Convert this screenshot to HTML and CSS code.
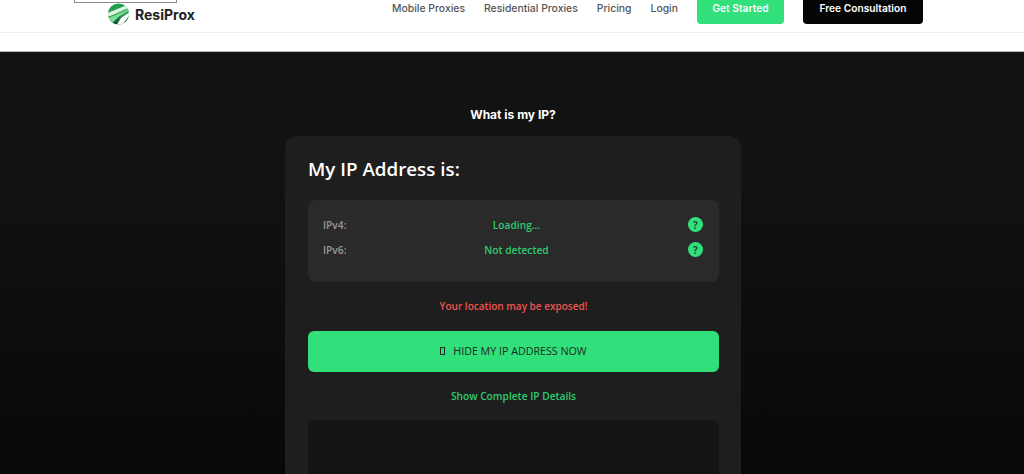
FILE: index.html
```html
<!DOCTYPE html>
<html lang="en">
<head>
<meta charset="utf-8">
<title>What is my IP? - ResiProx</title>
<link rel="stylesheet" href="styles.css">
</head>
<body>
<header class="site-header">
  <div class="brand">
    <span class="broken-image"></span>
    <svg class="brand-icon" viewBox="0 0 24 24" aria-hidden="true">
      <defs>
        <linearGradient id="globe" x1="0" y1="0" x2="0" y2="1">
          <stop offset="0" stop-color="#1fa04f"/>
          <stop offset="0.55" stop-color="#2a9a52"/>
          <stop offset="1" stop-color="#0c4f2a"/>
        </linearGradient>
        <clipPath id="disc"><circle cx="12" cy="12" r="11.5"/></clipPath>
      </defs>
      <circle cx="12" cy="12" r="11.5" fill="url(#globe)"/>
      <g clip-path="url(#disc)">
        <path d="M0 11 L24 1 L24 5 L6 13 L0 15Z" fill="#d8f5df"/>
        <path d="M0 16 L7 14 L24 6 L24 8 L12 15 L3 24 L0 24Z" fill="#7fdc98"/>
        <path d="M24 10 L24 13 L16 24 L10 24 L15 16Z" fill="#ffffff"/>
      </g>
    </svg>
    <span class="brand-name">ResiProx</span>
  </div>
  <nav class="main-nav">
    <a class="nav-link" href="#">Mobile Proxies</a>
    <a class="nav-link" href="#">Residential Proxies</a>
    <a class="nav-link" href="#">Pricing</a>
    <a class="nav-link" href="#">Login</a>
    <a class="cta cta-green" href="#">Get Started</a>
    <a class="cta cta-black" href="#">Free Consultation</a>
  </nav>
</header>
<div class="header-spacer"></div>
<main class="hero">
  <div class="hero-specks"></div>
  <h1 class="page-title">What is my IP?</h1>
  <section class="card">
    <h2 class="card-title">My IP Address is:</h2>
    <div class="ip-panel">
      <div class="ip-row">
        <span class="ip-label">IPv4:</span>
        <span class="ip-value">Loading...</span>
        <span class="help">?</span>
      </div>
      <div class="ip-row">
        <span class="ip-label">IPv6:</span>
        <span class="ip-value">Not detected</span>
        <span class="help">?</span>
      </div>
    </div>
    <p class="warning">Your location may be exposed!</p>
    <a class="hide-btn" href="#"><span class="tofu"></span>HIDE MY IP ADDRESS NOW</a>
    <a class="details-link" href="#">Show Complete IP Details</a>
    <div class="map-box"></div>
  </section>
</main>
</body>
</html>
```
FILE: styles.css
```css
* { box-sizing: border-box; }
html, body { margin: 0; height: 100%; overflow: hidden; }
body { background: #060606; font-family: "Open Sans", "Noto Sans", sans-serif; }
a { text-decoration: none; }

.site-header {
  height: 33px;
  background: #fff;
  border-bottom: 1px solid #eee;
  display: flex;
  justify-content: space-between;
  align-items: flex-end;
  padding: 0 101px 8px 107px;
}
.brand { position: relative; display: flex; align-items: center; gap: 5px; margin-bottom: -1px; }
.broken-image {
  position: absolute;
  left: -33px;
  bottom: 22px;
  width: 103px;
  height: 20px;
  border: 1px solid #8a8a8a;
}
.brand-icon { width: 23px; height: 22px; display: block; }
.brand-name {
  font-family: "Inter", sans-serif;
  font-weight: 700;
  font-size: 14px;
  color: #222;
}
.main-nav { display: flex; align-items: center; }
.nav-link {
  font-family: "Inter", sans-serif;
  font-weight: 500;
  font-size: 10.4px;
  color: #555;
  margin-right: 19px;
  white-space: nowrap;
}
.cta {
  height: 32px;
  display: flex;
  align-items: center;
  justify-content: center;
  border-radius: 4px;
  font-family: "Inter", sans-serif;
  font-weight: 600;
  font-size: 10.2px;
  color: #fff;
  white-space: nowrap;
}
.cta-green { width: 87px; background: #31e07a; margin-right: 19px; }
.cta-black { width: 120px; background: #050505; }

.header-spacer { height: 19px; background: #fff; border-bottom: 1px solid #b5b5b5; }

.hero {
  height: calc(100vh - 52px);
  display: flex;
  flex-direction: column;
  align-items: center;
  padding-left: 2px;
  background: linear-gradient(#121212 0, #121212 30%, #080808 100%);
}
.hero-specks {
  width: 990px;
  height: 14px;
  margin-top: 21px;
  background-image: radial-gradient(circle, #262626 0.6px, transparent 0.9px);
  background-size: 11px 5px;
}
.page-title {
  margin: 19px 0 12px;
  padding-top: 14px;
  font-family: "Inter", sans-serif;
  font-size: 12px;
  line-height: 18px;
  font-weight: 700;
  color: #fff;
}
.card {
  width: 456px;
  flex: none;
  height: 500px;
  background: #1e1e1e;
  border-radius: 12px;
  padding: 18px 22px 18px 23px;
}
.card-title { margin: 0 0 16px; font-size: 18.8px; line-height: 30px; font-weight: 600; color: #fff; }
.ip-panel {
  background: #2a2a2a;
  border-radius: 8px;
  padding: 17px 16px 17px 15px;
  height: 82px;
  display: flex;
  flex-direction: column;
  gap: 10px;
}
.ip-row {
  display: grid;
  grid-template-columns: 1fr auto 1fr;
  align-items: center;
  height: 15px;
}
.ip-label { font-size: 10.2px; font-weight: 600; color: #999; }
.ip-value { margin-left: 7px; font-size: 10.2px; font-weight: 600; color: #2ecc6f; }
.help {
  justify-self: end;
  width: 15px;
  height: 15px;
  border-radius: 50%;
  background: #31e07a;
  color: #1e4a30;
  font-size: 10px;
  font-weight: 700;
  display: flex;
  align-items: center;
  justify-content: center;
}
.warning { margin: 16px 0 17px; text-align: center; font-size: 10px; line-height: 16px; font-weight: 600; color: #ef5350; }
.hide-btn {
  height: 41px;
  padding-bottom: 2px;
  background: #31e07a;
  border-radius: 6px;
  display: flex;
  align-items: center;
  justify-content: center;
  font-size: 10.7px;
  font-weight: 500;
  color: #1e2a24;
}
.tofu { width: 5px; height: 8px; border: 1px solid #1e2a24; margin-right: 8px; }
.details-link { display: block; margin: 16px 0 16px; text-align: center; font-size: 10.2px; line-height: 16px; font-weight: 600; color: #2ecc6f; }
.map-box { height: 200px; background: #141414; border-radius: 8px; }
```
